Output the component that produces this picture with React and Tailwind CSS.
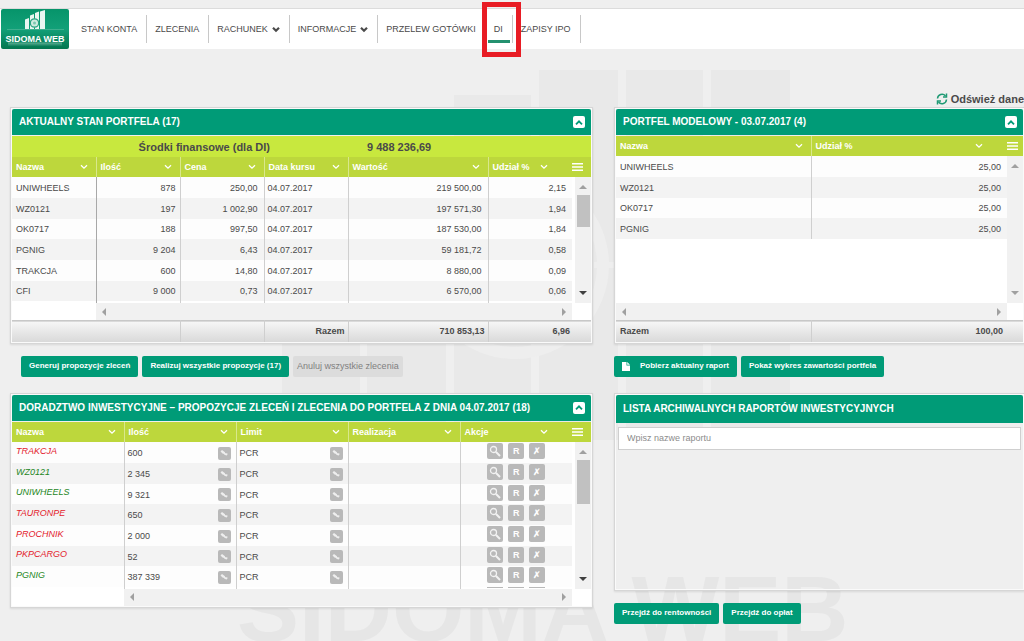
import { useState } from "react";
import clsx from "clsx";

const holdings = [
  ["UNIWHEELS", "878", "250,00", "04.07.2017", "219 500,00", "2,15"],
  ["WZ0121", "197", "1 002,90", "04.07.2017", "197 571,30", "1,94"],
  ["OK0717", "188", "997,50", "04.07.2017", "187 530,00", "1,84"],
  ["PGNIG", "9 204", "6,43", "04.07.2017", "59 181,72", "0,58"],
  ["TRAKCJA", "600", "14,80", "04.07.2017", "8 880,00", "0,09"],
  ["CFI", "9 000", "0,73", "04.07.2017", "6 570,00", "0,06"],
];

const modelPortfolio = [
  ["UNIWHEELS", "25,00"],
  ["WZ0121", "25,00"],
  ["OK0717", "25,00"],
  ["PGNIG", "25,00"],
];

const proposals = [
  { name: "TRAKCJA", amount: "600", side: "sell" },
  { name: "WZ0121", amount: "2 345", side: "buy" },
  { name: "UNIWHEELS", amount: "9 321", side: "buy" },
  { name: "TAURONPE", amount: "650", side: "sell" },
  { name: "PROCHNIK", amount: "2 000", side: "sell" },
  { name: "PKPCARGO", amount: "52", side: "sell" },
  { name: "PGNIG", amount: "387 339", side: "buy" },
];

const rowClass = "h-[21px] nth-[3n]:h-[20px] bg-[#fdfdfd] even:bg-[#f3f3f3]";
const footClass = "h-[21px] border-t border-[#c8c8c8] bg-linear-to-b from-[#f6f6f6] to-[#d9d9d9] font-bold";
const cellLine = "border-l border-[#cfcfcf]";

function Chevron({ className, strokeWidth = 1.5 }) {
  return (
    <svg viewBox="0 0 8 6" className={className} fill="none" stroke="currentColor" strokeWidth={strokeWidth}>
      <path d="M1 1.2 4 4.2 7 1.2" />
    </svg>
  );
}

function Arrow({ d, dark }) {
  return (
    <svg viewBox="0 0 8 8" className={clsx("size-2 shrink-0", dark ? "fill-[#404040]" : "fill-[#a0a0a0]")}>
      <path d={d} />
    </svg>
  );
}

function MenuIcon() {
  return (
    <svg viewBox="0 0 11 8" className="h-2 w-[11px]" fill="#fff">
      <path d="M0 0h11v1.6H0zM0 3.2h11v1.6H0zM0 6.4h11V8H0z" />
    </svg>
  );
}

function Logo() {
  return (
    <svg viewBox="0 0 68 40" className="h-10 w-[68px]" role="img" aria-label="Sidoma Web">
      <defs>
        <linearGradient id="logo" x1="0" y1="0" x2="0" y2="1">
          <stop offset="0" stopColor="#06946a" />
          <stop offset="0.5" stopColor="#12a078" />
          <stop offset="1" stopColor="#04764f" />
        </linearGradient>
        <linearGradient id="logoFade" x1="0" y1="0" x2="0" y2="1">
          <stop offset="0" stopColor="#fff" stopOpacity="0" />
          <stop offset="1" stopColor="#fff" stopOpacity="0.35" />
        </linearGradient>
      </defs>
      <rect width="68" height="40" rx="2" fill="url(#logo)" />
      <path d="M24 10.500l4-1.500v11h-4zM29 6.500l4-1.500v15h-4zM34 4l4-1.500V20h-4zM39 2.500l5-1.500v19h-5z" fill="#e9f6f1" />
      <circle cx="33.500" cy="14" r="4.200" fill="#cfeae0" stroke="#2aa583" strokeWidth="1.300" />
      <circle cx="33.500" cy="14" r="1.500" fill="#7cc9b0" />
      <path d="M6 20.500h57" stroke="#5dbb9e" strokeWidth="0.600" />
      <text x="34" y="33" textAnchor="middle" fontSize="9" fontWeight="700" fill="#fff" fontFamily="Liberation Sans, sans-serif">
        SIDOMA WEB
      </text>
      <g transform="translate(0 67.500) scale(1 -1)" aria-hidden="true">
        <path d="M7 30h54v4H7z" fill="url(#logoFade)" />
      </g>
    </svg>
  );
}

function Watermark() {
  return (
    <svg viewBox="0 0 1024 641" aria-hidden="true" className="absolute left-0 top-0 h-[641px] w-[1024px]">
      <g fill="#e9e9e9">
        <path d="M282 330h78v110h-78zM367 230h79v210h-79zM454 95h77v345h-77zM539 70h79v370h-79zM626 70h77v370h-77zM711 70h79v370h-79z" />
      </g>
      <g fill="none" stroke="#eeeeee" strokeWidth="12">
        <circle cx="515" cy="265" r="88" />
      </g>
      <path d="M594 262h20v6h-20z" fill="#eeeeee" />
      <text x="237" y="641" fontSize="93" fontWeight="700" fill="#e6e6e6" fontFamily="Liberation Sans, sans-serif">
        SIDOMA WEB
      </text>
    </svg>
  );
}

function NavItem({ label, menu, active }) {
  return (
    <li className="relative flex h-7 items-center border-r border-[#c8c8c8] pl-2 pr-[9px]">
      <a href="#" className="flex items-center gap-1">
        {label}
        {menu && <Chevron className="h-[7px] w-2" strokeWidth={2.2} />}
      </a>
      {active && (
        <>
          <span className="absolute inset-x-0.5 bottom-0 h-[3px] bg-[#24916f]" />
          <span className="absolute -bottom-[14px] -left-1 -right-[9px] -top-[13px] z-10 border-[5px] border-[#e81c24]" />
        </>
      )}
    </li>
  );
}

function Panel({ title, collapsible, tall, children, className }) {
  const [open, setOpen] = useState(true);
  return (
    <section
      className={clsx(
        "border border-[#d6d6d6] p-px shadow-[inset_0_0_0_1px_#fafafa,0_1px_2px_rgba(0,0,0,0.1)]",
        className,
      )}
    >
      <header
        className={clsx(
          "mb-px flex items-center justify-between rounded-t-xs bg-[#009b77] pl-[7px] pr-1.5 text-white",
          tall ? "h-7" : "h-[26px]",
        )}
      >
        <h2 className="whitespace-nowrap text-[10px] font-bold">{title}</h2>
        {collapsible && (
          <button
            type="button"
            aria-label="Zwiń"
            onClick={() => setOpen(!open)}
            className="flex size-3 items-center justify-center rounded-xs bg-white text-[#009b77]"
          >
            <Chevron className={clsx("h-[7px] w-2", open && "rotate-180")} strokeWidth={1.8} />
          </button>
        )}
      </header>
      {open && children}
    </section>
  );
}

function TableHead({ columns }) {
  return (
    <thead>
      <tr className="h-5 bg-[#bdd73c] text-white">
        {columns.map((name, i) => (
          <th key={name} className={clsx("pl-1 text-left font-bold", i > 0 && "border-l border-[#d9e88c]")}>
            <span className={clsx("flex items-center justify-between", i === columns.length - 1 ? "pr-6" : "pr-2")}>
              {name}
              <Chevron className="h-1.5 w-2" strokeWidth={1.3} />
            </span>
          </th>
        ))}
        <th>
          <button type="button" aria-label="Menu" className="flex">
            <MenuIcon />
          </button>
        </th>
      </tr>
    </thead>
  );
}

function VerticalScroll({ dark, thumb }) {
  return (
    <div className="flex h-full flex-col items-center bg-[#f1f1f1] py-1.5">
      <Arrow d="M0 6h8L4 2z" />
      {thumb && <div className={clsx("mt-1 w-[13px] bg-[#c1c1c1]", thumb)} />}
      <div className="mt-auto">
        <Arrow d="M0 2h8L4 6z" dark={dark} />
      </div>
    </div>
  );
}

function HorizontalScroll() {
  return (
    <div className="flex h-[17px] items-center justify-between bg-[#f1f1f1] px-1">
      <Arrow d="M6 0v8L2 4z" />
      <Arrow d="M2 0v8l4-4z" />
    </div>
  );
}

function ActionButton({ label, children }) {
  return (
    <button
      type="button"
      aria-label={label}
      className="flex size-4 items-center justify-center rounded-xs bg-[#b9b9b9] text-[9px] font-bold text-white"
    >
      {children}
    </button>
  );
}

function EditableValue({ value }) {
  return (
    <span className="flex items-center justify-between pr-[5px] pt-0.5">
      {value}
      <button
        type="button"
        aria-label="Edytuj"
        className="flex size-[13px] items-center justify-center rounded-xs bg-[#b9b9b9]"
      >
        <svg viewBox="0 0 8 8" className="size-2" fill="#eeeeee">
          <path d="M0.500 2.500L2 1l3 2.200v2L2.500 4.500zM5.500 4L7.800 4.800 6.800 6.500 4 5.800z" />
        </svg>
      </button>
    </span>
  );
}

function Button({ children, disabled }) {
  return (
    <button
      type="button"
      disabled={disabled}
      className={clsx(
        "flex h-[21px] items-center whitespace-nowrap rounded-xs",
        disabled ? "bg-[#dcdcdc] px-1 text-[9px] text-[#808080]" : "bg-[#009b77] px-2 text-[8px] font-bold text-white",
      )}
    >
      {children}
    </button>
  );
}

function HoldingsTable() {
  return (
    <table className="w-full table-fixed bg-white">
      <colgroup>
        <col className="w-[84px]" />
        <col className="w-[84px]" />
        <col className="w-[84px]" />
        <col className="w-[84px]" />
        <col className="w-[140px]" />
        <col className="w-[84px]" />
        <col className="w-[19px]" />
      </colgroup>
      <TableHead columns={["Nazwa", "Ilość", "Cena", "Data kursu", "Wartość", "Udział %"]} />
      <tbody>
        {holdings.map(([name, amount, price, date, value, share], i) => (
          <tr key={name} className={rowClass}>
            <td className="pl-1">{name}</td>
            <td className="border-l border-[#a8a8a8] pr-1 text-right">{amount}</td>
            <td className={clsx(cellLine, "pr-1.5 text-right")}>{price}</td>
            <td className={clsx(cellLine, "pl-[3px]")}>{date}</td>
            <td className={clsx(cellLine, "pr-1.5 text-right")}>{value}</td>
            <td className={clsx(cellLine, "pr-1.5 text-right")}>{share}</td>
            {i === 0 && (
              <td rowSpan={7} className="bg-white pl-[3px]">
                <div className="h-[126px]">
                  <VerticalScroll dark thumb="h-8" />
                </div>
              </td>
            )}
          </tr>
        ))}
        {/* sliver of the next row */}
        <tr className="h-0.5">
          <td />
          <td className="border-l border-[#a8a8a8]" />
          <td className={cellLine} />
          <td className={cellLine} />
          <td className={cellLine} />
          <td className={cellLine} />
        </tr>
        <tr>
          <td />
          <td colSpan={5}>
            <HorizontalScroll />
          </td>
          <td />
        </tr>
      </tbody>
      <tfoot>
        <tr className={footClass}>
          <td colSpan={2} />
          <td className={cellLine} />
          <td className={clsx(cellLine, "pr-[3px] text-right")}>Razem</td>
          <td className={clsx(cellLine, "pr-[3px] text-right")}>710 853,13</td>
          <td className={clsx(cellLine, "pr-0.5 text-right")}>6,96</td>
          <td />
        </tr>
      </tfoot>
    </table>
  );
}

function ModelTable() {
  return (
    <table className="w-full table-fixed bg-white">
      <colgroup>
        <col className="w-[195px]" />
        <col className="w-[196px]" />
        <col className="w-[16px]" />
      </colgroup>
      <TableHead columns={["Nazwa", "Udział %"]} />
      <tbody>
        {modelPortfolio.map(([name, share], i) => (
          <tr key={name} className={rowClass}>
            <td className="pl-1">{name}</td>
            <td className={clsx(cellLine, "pr-1.5 text-right")}>{share}</td>
            {i === 0 && (
              <td rowSpan={5} className="bg-white">
                <div className="h-[147px]">
                  <VerticalScroll />
                </div>
              </td>
            )}
          </tr>
        ))}
        <tr className="h-16">
          <td colSpan={2} />
        </tr>
        <tr>
          <td colSpan={2}>
            <HorizontalScroll />
          </td>
          <td />
        </tr>
      </tbody>
      <tfoot>
        <tr className={footClass}>
          <td className="pl-1">Razem</td>
          <td className={clsx(cellLine, "pr-1 text-right")}>100,00</td>
          <td />
        </tr>
      </tfoot>
    </table>
  );
}

function ProposalsTable() {
  return (
    <table className="w-full table-fixed bg-white">
      <colgroup>
        <col className="w-[112px]" />
        <col className="w-[112px]" />
        <col className="w-[112px]" />
        <col className="w-[112px]" />
        <col className="w-[112px]" />
        <col className="w-[19px]" />
      </colgroup>
      <TableHead columns={["Nazwa", "Ilość", "Limit", "Realizacja", "Akcje"]} />
      <tbody>
        {proposals.map(({ name, amount, side }, i) => (
          <tr key={name} className={rowClass}>
            <td className={clsx("pb-[3px] pl-1 italic", side === "sell" ? "text-[#e3202b]" : "text-[#1c861c]")}>
              {name}
            </td>
            <td className={clsx(cellLine, "pl-[3px]")}>
              <EditableValue value={amount} />
            </td>
            <td className={clsx(cellLine, "pl-[3px]")}>
              <EditableValue value="PCR" />
            </td>
            <td className={cellLine} />
            <td className={cellLine}>
              <div className="flex justify-center gap-[5px] pb-0.5">
                <ActionButton label="Szczegóły">
                  <svg viewBox="0 0 12 12" className="size-3" fill="none" stroke="#f2f2f2">
                    <circle cx="4.500" cy="4.500" r="3" strokeWidth="1.300" />
                    <path d="M7 7l4 4" strokeWidth="2" />
                  </svg>
                </ActionButton>
                <ActionButton>R</ActionButton>
                <ActionButton>✗</ActionButton>
              </div>
            </td>
            {i === 0 && (
              <td rowSpan={8} className="bg-white pl-[3px]">
                <div className="h-[147px]">
                  <VerticalScroll dark thumb="h-11" />
                </div>
              </td>
            )}
          </tr>
        ))}
        {/* sliver of the next row */}
        <tr className="h-0.5">
          <td />
          <td className={cellLine} />
          <td className={cellLine} />
          <td className={cellLine} />
          <td className={cellLine}>
            <div className="flex justify-center gap-[5px]">
              <span className="h-px w-4 bg-[#b9b9b9]" />
              <span className="h-px w-4 bg-[#b9b9b9]" />
              <span className="h-px w-4 bg-[#b9b9b9]" />
            </div>
          </td>
        </tr>
        <tr>
          <td />
          <td colSpan={4}>
            <HorizontalScroll />
          </td>
          <td />
        </tr>
      </tbody>
    </table>
  );
}

export default function App() {
  return (
    <div className="relative min-h-screen overflow-hidden bg-[#efefef] pt-2 font-['Liberation_Sans',Arial,sans-serif] text-[9px] leading-3 text-[#4a4a4a]">
      <Watermark />

      <header className="relative flex h-[41px] items-center border-t border-[#dcdcdc] bg-white pl-px">
        <Logo />
        <nav className="pl-1">
          <ul className="flex items-center">
            <NavItem label="STAN KONTA" />
            <NavItem label="ZLECENIA" />
            <NavItem label="RACHUNEK" menu />
            <NavItem label="INFORMACJE" menu />
            <NavItem label="PRZELEW GOTÓWKI" />
            <NavItem label="DI" active />
            <NavItem label="ZAPISY IPO" />
          </ul>
        </nav>
      </header>

      <main className="relative pt-11">
        <div className="flex h-[14px] items-start justify-end">
          <button type="button" className="flex items-center gap-[3px] text-[11px] font-bold">
            <svg viewBox="0 0 12 12" className="size-3" fill="none" stroke="#1f9a74" strokeWidth="1.500">
              <path d="M1.500 5.500A4.500 4.500 0 0 1 9.500 3M10.500 6.500A4.500 4.500 0 0 1 2.500 9" />
              <path d="M10.500 .5v3.500H7M1.500 11.500V8H5" />
            </svg>
            Odśwież dane
          </button>
        </div>

        <div className="grid grid-cols-[583fr_410fr] gap-x-[21px] pl-2.5">
          <div>
            <Panel title="AKTUALNY STAN PORTFELA (17)" collapsible>
              <div className="grid h-[21px] grid-cols-[258px_1fr] items-center bg-[#c8e83e] text-[11px] font-bold">
                <span className="text-right">Środki finansowe (dla DI)</span>
                <span className="pl-[97px]">9 488 236,69</span>
              </div>
              <HoldingsTable />
            </Panel>
            <div className="flex gap-1 pb-4 pl-[11px] pt-3">
              <Button>Generuj propozycje zleceń</Button>
              <Button>Realizuj wszystkie propozycje (17)</Button>
              <Button disabled>Anuluj wszystkie zlecenia</Button>
            </div>
            <Panel
              title="DORADZTWO INWESTYCYJNE – PROPOZYCJE ZLECEŃ I ZLECENIA DO PORTFELA Z DNIA 04.07.2017 (18)"
              collapsible
            >
              <ProposalsTable />
            </Panel>
          </div>

          <div>
            <Panel title="PORTFEL MODELOWY - 03.07.2017 (4)" collapsible>
              <ModelTable />
            </Panel>
            <div className="flex gap-1 pb-4 pt-3">
              <Button>
                <svg viewBox="0 0 8 9" className="mr-2.5 h-[9px] w-2" fill="#fff">
                  <path d="M0 0h4.500v3.500H8V9H0zM5.200 0L8 2.800H5.200z" />
                </svg>
                Pobierz aktualny raport
              </Button>
              <Button>Pokaż wykres zawartości portfela</Button>
            </div>
            <Panel title="LISTA ARCHIWALNYCH RAPORTÓW INWESTYCYJNYCH" tall className="h-[198px]">
              <div className="px-0.5 pt-[3px]">
                <input
                  type="text"
                  aria-label="Nazwa raportu"
                  placeholder="Wpisz nazwe raportu"
                  className="h-[23px] w-full border border-[#cfcfcf] bg-white px-2 placeholder:text-[#8c8c8c]"
                />
              </div>
            </Panel>
            <div className="flex gap-1 pt-3">
              <Button>Przejdź do rentowności</Button>
              <Button>Przejdź do opłat</Button>
            </div>
          </div>
        </div>
      </main>
    </div>
  );
}
